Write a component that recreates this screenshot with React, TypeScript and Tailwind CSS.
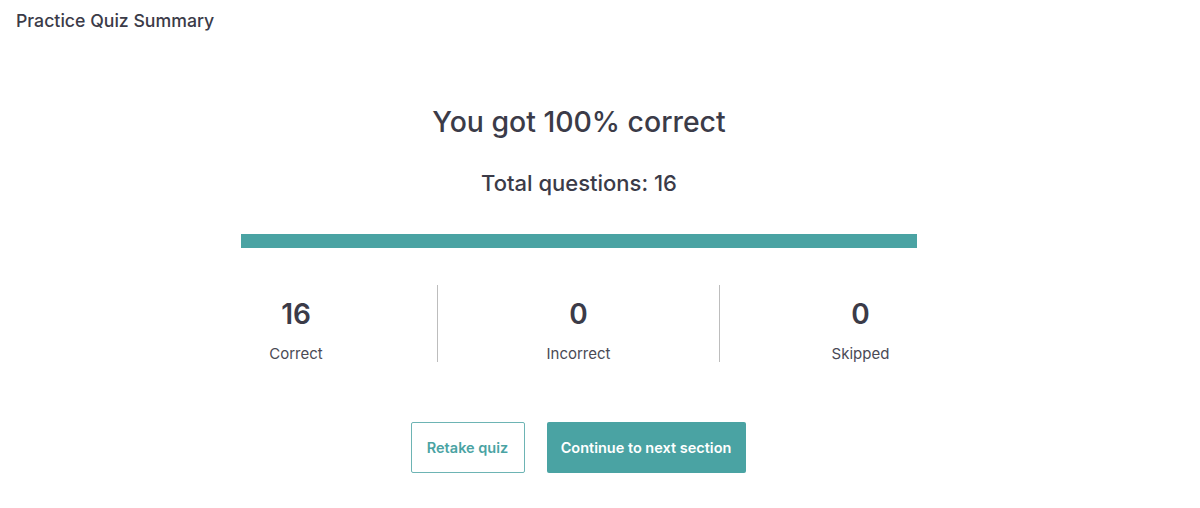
import React from 'react';

const stats = [
    { value: '16', label: 'Correct' },
    { value: '0', label: 'Incorrect' },
    { value: '0', label: 'Skipped' },
];

const App: React.FC = () => {
    return (
        <div className="w-[1200px] h-[508px] bg-white text-[#3b3b48] font-['Inter',sans-serif] overflow-hidden">
            <h1 className="pl-4 pt-[9px] text-[17.7px] leading-6 font-medium">Practice Quiz Summary</h1>

            <div className="w-[1158px] flex flex-col items-center">
                <h2 className="mt-[71px] text-[28.4px] leading-9 font-medium">You got 100% correct</h2>
                <p className="mt-[29px] text-[22px] leading-7 font-medium">Total questions: 16</p>

                <div className="mt-[37px] w-[676px] h-[14px] bg-[#4aa3a3]" />

                <div className="mt-[37px] ml-[-2px] w-[846px] grid grid-cols-3">
                    {stats.map((s, i) => (
                        <div
                            key={s.label}
                            className={`h-[77px] flex flex-col items-center ${i > 0 ? 'border-l border-[#bdbdbd]' : ''}`}
                        >
                            <span className="mt-[13px] text-[28px] leading-8 font-semibold">{s.value}</span>
                            <span className="mt-[14px] text-[15px] leading-5 text-[#4a4a55]">{s.label}</span>
                        </div>
                    ))}
                </div>

                <div className="mt-[60px] ml-[-2px] flex gap-[22px]">
                    <button className="w-[114px] h-[51px] border border-[#6db4b4] rounded-[2px] text-[#4aa3a3] text-[14.5px] font-semibold">
                        Retake quiz
                    </button>
                    <button className="w-[199px] h-[51px] bg-[#4aa3a3] rounded-[2px] text-white text-[14.5px] font-semibold">
                        Continue to next section
                    </button>
                </div>
            </div>
        </div>
    );
};

export default App;
